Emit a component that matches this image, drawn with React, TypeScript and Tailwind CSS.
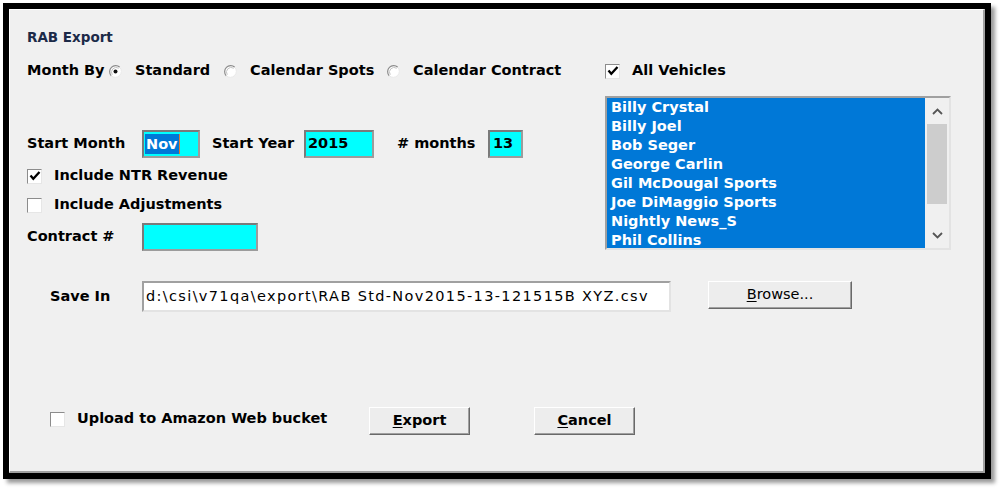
import React from "react";

const vehicles = [
  "Billy Crystal",
  "Billy Joel",
  "Bob Seger",
  "George Carlin",
  "Gil McDougal Sports",
  "Joe DiMaggio Sports",
  "Nightly News_S",
  "Phil Collins",
];

function Radio({ checked }: { checked?: boolean }) {
  return (
    <svg width="13" height="13" viewBox="0 0 13 13" className="shrink-0">
      <circle cx="6.5" cy="6.5" r="6" fill="#fff" />
      <path d="M2.26 10.74 A6 6 0 0 1 10.74 2.26" fill="none" stroke="#8a8a8a" strokeWidth="1.2" />
      <path d="M10.74 2.26 A6 6 0 0 1 2.26 10.74" fill="none" stroke="#e8e8e8" strokeWidth="1" />
      <path d="M3.3 9.7 A4.6 4.6 0 0 1 9.7 3.3" fill="none" stroke="#c4c4c4" strokeWidth="1" />
      {checked && <circle cx="6.5" cy="6.5" r="2" fill="#111" />}
    </svg>
  );
}

function Check({ checked }: { checked?: boolean }) {
  return (
    <span className="w-[15px] h-[15px] shrink-0 flex items-center justify-center bg-white border border-t-[#8c8c8c] border-l-[#8c8c8c] border-r-[#e6e6e6] border-b-[#e6e6e6]">
      {checked && (
        <svg width="12" height="12" viewBox="0 0 12 12">
          <path d="M1.5 5.5 L4.3 8.8 L10.5 2" fill="none" stroke="#000" strokeWidth="2.3" />
        </svg>
      )}
    </span>
  );
}

function Button({ children, className = "" }: { children: React.ReactNode; className?: string }) {
  return (
    <div
      className={`h-[28px] flex items-center justify-center bg-[#ededed] border border-t-white border-l-white border-r-[#696969] border-b-[#696969] shadow-[inset_-1px_-1px_0_#a0a0a0] text-[14.5px] ${className}`}
    >
      {children}
    </div>
  );
}

const cyanInput =
  "h-[28px] bg-[#00ffff] border-2 border-t-[#7a7a7a] border-l-[#7a7a7a] border-r-[#9c9c9c] border-b-[#9c9c9c] flex items-center";

export default function App() {
  return (
    <div className="w-[1004px] h-[492px] bg-white pt-[3px] pl-[3px] font-['DejaVu_Sans',sans-serif] text-black">
      <div className="w-[988px] h-[476px] border-[6px] border-black shadow-[4px_4px_4px_rgba(0,0,0,0.4)]">
        <div className="h-full bg-[#f0f0f0] border-t border-l border-white border-r-2 border-b-2 border-r-[#a0a0a0] border-b-[#a0a0a0] pl-[17px] pt-[19px] text-[14.5px] font-bold">
          {/* Top area */}
          <div className="flex">
            <div className="w-[578px]">
              <div className="h-[16px] leading-[16px] text-[13.5px] text-[#1c2a48]">RAB Export</div>

              <div className="mt-[16px] h-[20px] flex items-center">
                <span className="w-[82px]">Month By</span>
                <div className="w-[115px] flex items-center gap-[13px]">
                  <Radio checked />
                  <span>Standard</span>
                </div>
                <div className="w-[163px] flex items-center gap-[13px]">
                  <Radio />
                  <span>Calendar Spots</span>
                </div>
                <div className="flex items-center gap-[13px]">
                  <Radio />
                  <span>Calendar Contract</span>
                </div>
              </div>

              <div className="mt-[49px] h-[28px] flex items-center">
                <span className="w-[115px]">Start Month</span>
                <div className={`w-[58px] pl-[1px] ${cyanInput}`}>
                  <span className="h-[20px] leading-[20px] px-[1px] bg-[#0078d7] text-white">Nov</span>
                  <span className="w-[1px] h-[20px] bg-[#e07b2c]" />
                </div>
                <span className="ml-[12px] w-[92px]">Start Year</span>
                <div className={`w-[70px] pl-[2px] ${cyanInput}`}>2015</div>
                <span className="ml-[23px] w-[91px]"># months</span>
                <div className={`w-[35px] pl-[3px] ${cyanInput}`}>13</div>
              </div>

              <div className="mt-[10px] h-[16px] flex items-center gap-[12px]">
                <Check checked />
                <span>Include NTR Revenue</span>
              </div>
              <div className="mt-[13px] h-[16px] flex items-center gap-[12px]">
                <Check />
                <span>Include Adjustments</span>
              </div>

              <div className="mt-[10px] h-[28px] flex items-center">
                <span className="w-[115px]">Contract #</span>
                <div className={`w-[116px] ${cyanInput}`} />
              </div>
            </div>

            <div className="w-[346px]">
              <div className="mt-[32px] h-[20px] flex items-center gap-[12px]">
                <Check checked />
                <span>All Vehicles</span>
              </div>

              <div className="mt-[15px] h-[154px] flex border-2 border-t-[#a0a0a0] border-l-[#a0a0a0] border-r-[#e3e3e3] border-b-[#e3e3e3]">
                <div className="flex-1 bg-[#0078d7] overflow-hidden">
                  {vehicles.map((v) => (
                    <div key={v} className="h-[19px] leading-[19px] pl-[4px] text-white whitespace-nowrap">
                      {v}
                    </div>
                  ))}
                </div>
                <div className="w-[24px] bg-[#f0f0f0] flex flex-col">
                  <div className="h-[26px] flex items-center justify-center">
                    <svg width="11" height="7" viewBox="0 0 11 7">
                      <path d="M1 6 L5.5 1.5 L10 6" fill="none" stroke="#555" strokeWidth="1.8" />
                    </svg>
                  </div>
                  <div className="mx-[2px] h-[80px] bg-[#cdcdcd]" />
                  <div className="flex-1" />
                  <div className="h-[26px] flex items-center justify-center">
                    <svg width="11" height="7" viewBox="0 0 11 7">
                      <path d="M1 1 L5.5 5.5 L10 1" fill="none" stroke="#555" strokeWidth="1.8" />
                    </svg>
                  </div>
                </div>
              </div>
            </div>
          </div>

          {/* Save In */}
          <div className="mt-[30px] flex items-start">
            <span className="ml-[23px] w-[92px] h-[31px] flex items-center">Save In</span>
            <div className="w-[529px] h-[31px] bg-white border-2 border-t-[#a0a0a0] border-l-[#a0a0a0] border-r-[#e3e3e3] border-b-[#e3e3e3] flex items-center pl-[2px] font-normal tracking-[1.35px] whitespace-nowrap overflow-hidden">
              {"d:\\csi\\v71qa\\export\\RAB Std-Nov2015-13-121515B XYZ.csv"}
            </div>
            <Button className="ml-[37px] w-[144px] h-[27px] font-normal">
              <span>
                <u className="underline-offset-2">B</u>rowse...
              </span>
            </Button>
          </div>

          {/* Bottom */}
          <div className="mt-[95px] flex items-start">
            <div className="ml-[23px] w-[319px] mt-[4px] h-[16px] flex items-center gap-[12px]">
              <Check />
              <span>Upload to Amazon Web bucket</span>
            </div>
            <Button className="w-[101px]">
              <span>
                <u className="underline-offset-2">E</u>xport
              </span>
            </Button>
            <Button className="ml-[64px] w-[101px]">
              <span>
                <u className="underline-offset-2">C</u>ancel
              </span>
            </Button>
          </div>
        </div>
      </div>
    </div>
  );
}
